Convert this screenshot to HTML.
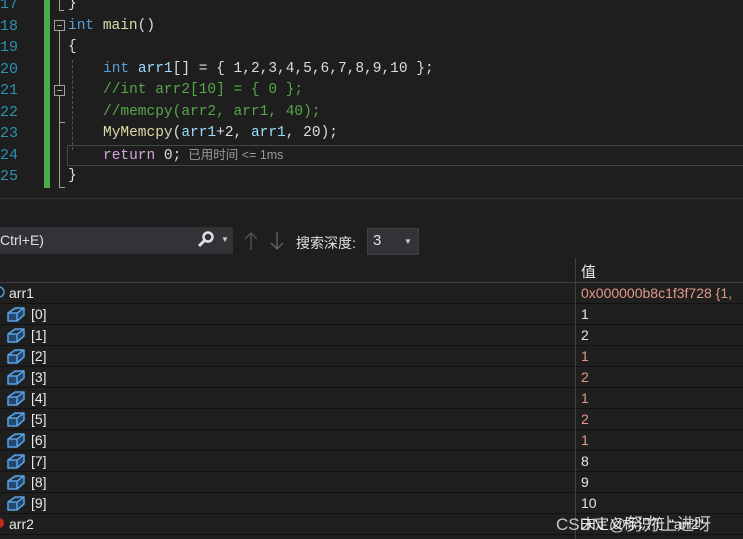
<!DOCTYPE html>
<html><head><meta charset="utf-8"><style>
body{margin:0;width:743px;height:539px;overflow:hidden;background:#1e1e1e;position:relative;font-family:"Liberation Sans","Noto Sans CJK SC",sans-serif;}
.a{position:absolute;white-space:pre;}
.ln{position:absolute;left:0;width:16px;text-align:right;color:#2b91af;font-family:"Liberation Mono",monospace;font-size:15px;line-height:21.5px;}
.code{position:absolute;left:68px;font-family:"Liberation Mono","Noto Sans CJK SC",monospace;font-size:14.5px;line-height:21.5px;color:#dcdcdc;white-space:pre;}
.k{color:#569cd6}.v{color:#9cdcfe}.f{color:#dcdcaa}.c{color:#57a64a}.r{color:#d8a0df}
.row{position:absolute;left:0;width:743px;height:20px;border-bottom:1px solid #121212;background:#1f1f1f;font-size:14px;line-height:20px;color:#e8e8e8;}
.row .nm{position:absolute;left:31px;}
.row .vl{position:absolute;left:581px;}
.red{color:#e3988a !important}
.ic{position:absolute;left:6px;top:1px;}
</style></head><body>
<div class="ln" style="top:-6px">17</div>
<div class="ln" style="top:15.5px">18</div>
<div class="ln" style="top:37px">19</div>
<div class="ln" style="top:58.5px">20</div>
<div class="ln" style="top:80px">21</div>
<div class="ln" style="top:101.5px">22</div>
<div class="ln" style="top:123px">23</div>
<div class="ln" style="top:144.5px">24</div>
<div class="ln" style="top:166px">25</div>
<div class="a" style="left:44px;top:0;width:6px;height:188px;background:#4ea94b"></div>
<div class="a" style="left:59px;top:0;width:1px;height:10px;background:#a0a0a0"></div>
<div class="a" style="left:59px;top:10px;width:5px;height:1px;background:#a0a0a0"></div>
<div class="a" style="left:54px;top:20px;width:9px;height:9px;border:1px solid #a0a0a0"></div>
<div class="a" style="left:57px;top:25px;width:5px;height:1px;background:#a0a0a0"></div>
<div class="a" style="left:54px;top:85px;width:9px;height:9px;border:1px solid #a0a0a0"></div>
<div class="a" style="left:57px;top:90px;width:5px;height:1px;background:#a0a0a0"></div>
<div class="a" style="left:59px;top:31px;width:1px;height:54px;background:#a0a0a0"></div>
<div class="a" style="left:59px;top:96px;width:1px;height:26px;background:#a0a0a0"></div>
<div class="a" style="left:59px;top:122px;width:6px;height:1px;background:#a0a0a0"></div>
<div class="a" style="left:59px;top:122px;width:1px;height:65px;background:#a0a0a0"></div>
<div class="a" style="left:59px;top:187px;width:6px;height:1px;background:#a0a0a0"></div>
<div class="a" style="left:72px;top:60px;width:0;height:90px;border-left:1px dashed #555"></div>
<div class="a" style="left:67px;top:145px;width:680px;height:19px;border:1px solid #464646;border-right:none"></div>
<div class="code" style="top:-6px;left:68px">}</div>
<div class="code" style="top:15.5px"><span class="k">int</span> <span class="f">main</span>()</div>
<div class="code" style="top:37px">{</div>
<div class="code" style="top:58.5px;left:103px"><span class="k">int</span> <span class="v">arr1</span>[] = { 1,2,3,4,5,6,7,8,9,10 };</div>
<div class="code" style="top:80px;left:103px"><span class="c">//int arr2[10] = { 0 };</span></div>
<div class="code" style="top:101.5px;left:103px"><span class="c">//memcpy(arr2, arr1, 40);</span></div>
<div class="code" style="top:123px;left:103px"><span class="f">MyMemcpy</span>(<span class="v">arr1</span>+2, <span class="v">arr1</span>, 20);</div>
<div class="code" style="top:144.5px;left:103px"><span class="r">return</span> 0;<span style="font-family:'Liberation Sans','Noto Sans CJK SC',sans-serif;font-size:12.5px;color:#9a9a9a">  已用时间 &lt;= 1ms</span></div>
<div class="code" style="top:166px">}</div>
<div class="a" style="left:0;top:198px;width:743px;height:1px;background:#333"></div>
<div class="a" style="left:0;top:227px;width:233px;height:27px;background:#333337"></div>
<div class="a" style="left:0;top:232px;font-size:14px;color:#e0e0e0">Ctrl+E)</div>
<svg class="a" style="left:197px;top:231px" width="18" height="18"><circle cx="11" cy="6" r="4.5" fill="none" stroke="#e0e0e0" stroke-width="2.5"/><path d="M8 9 L2 15" stroke="#e0e0e0" stroke-width="3"/></svg>
<div class="a" style="left:221px;top:235px;font-size:8px;color:#ccc">▼</div>
<svg class="a" style="left:243px;top:231px" width="16" height="20"><path d="M8 2 V19 M2 8 L8 2 L14 8" fill="none" stroke="#555" stroke-width="1.3"/></svg>
<svg class="a" style="left:269px;top:231px" width="16" height="20"><path d="M8 1 V18 M2 12 L8 18 L14 12" fill="none" stroke="#666" stroke-width="1.3"/></svg>
<div class="a" style="left:296px;top:233px;font-size:14px;color:#e0e0e0">搜索深度:</div>
<div class="a" style="left:367px;top:228px;width:50px;height:25px;background:#333337;border:1px solid #3f3f46"></div>
<div class="a" style="left:373px;top:232px;font-size:15px;color:#e0e0e0">3</div>
<div class="a" style="left:404px;top:237px;font-size:8px;color:#ccc">▼</div>
<div class="a" style="left:575px;top:258px;width:1px;height:25px;background:#3f3f46"></div>
<div class="a" style="left:581px;top:261px;font-size:15px;color:#e8e8e8">值</div>
<div class="a" style="left:0;top:282px;width:743px;height:1px;background:#3f3f46"></div>
<svg width="0" height="0" style="position:absolute"><defs><g id="cube"><path d="M2 8 L9 3 L18 3 L18 10 L11 16 L2 16 Z M2 8 L11 8 L18 3 M11 8 L11 16" fill="#24476b" stroke="#5aa2e6" stroke-width="1.5" stroke-linejoin="round"/></g></defs></svg>
<div class="row" style="top:283px"><svg class="ic" style="left:-6px" width="14" height="16"><circle cx="5" cy="8" r="5" fill="none" stroke="#4f9be0" stroke-width="1.5"/></svg><span class="nm" style="left:9px">arr1</span><span class="vl red">0x000000b8c1f3f728 {1, 2</span></div>
<div class="row" style="top:304px"><svg class="ic" width="20" height="18"><use href="#cube"/></svg><span class="nm">[0]</span><span class="vl">1</span></div>
<div class="row" style="top:325px"><svg class="ic" width="20" height="18"><use href="#cube"/></svg><span class="nm">[1]</span><span class="vl">2</span></div>
<div class="row" style="top:346px"><svg class="ic" width="20" height="18"><use href="#cube"/></svg><span class="nm">[2]</span><span class="vl red">1</span></div>
<div class="row" style="top:367px"><svg class="ic" width="20" height="18"><use href="#cube"/></svg><span class="nm">[3]</span><span class="vl red">2</span></div>
<div class="row" style="top:388px"><svg class="ic" width="20" height="18"><use href="#cube"/></svg><span class="nm">[4]</span><span class="vl red">1</span></div>
<div class="row" style="top:409px"><svg class="ic" width="20" height="18"><use href="#cube"/></svg><span class="nm">[5]</span><span class="vl red">2</span></div>
<div class="row" style="top:430px"><svg class="ic" width="20" height="18"><use href="#cube"/></svg><span class="nm">[6]</span><span class="vl red">1</span></div>
<div class="row" style="top:451px"><svg class="ic" width="20" height="18"><use href="#cube"/></svg><span class="nm">[7]</span><span class="vl">8</span></div>
<div class="row" style="top:472px"><svg class="ic" width="20" height="18"><use href="#cube"/></svg><span class="nm">[8]</span><span class="vl">9</span></div>
<div class="row" style="top:493px"><svg class="ic" width="20" height="18"><use href="#cube"/></svg><span class="nm">[9]</span><span class="vl">10</span></div>
<div class="row" style="top:514px"><svg class="ic" style="left:-6px" width="14" height="16"><circle cx="5" cy="8" r="5" fill="#c42b1c"/></svg><span class="nm" style="left:9px">arr2</span><span class="vl">未定义标识符 "arr2"</span></div>
<div class="a" style="left:575px;top:283px;width:1px;height:256px;background:#3f3f46"></div>
<div class="a" style="left:556px;top:510px;font-size:17px;color:rgba(255,255,255,0.75)">CSDN @努力上进呀</div>
</body></html>
